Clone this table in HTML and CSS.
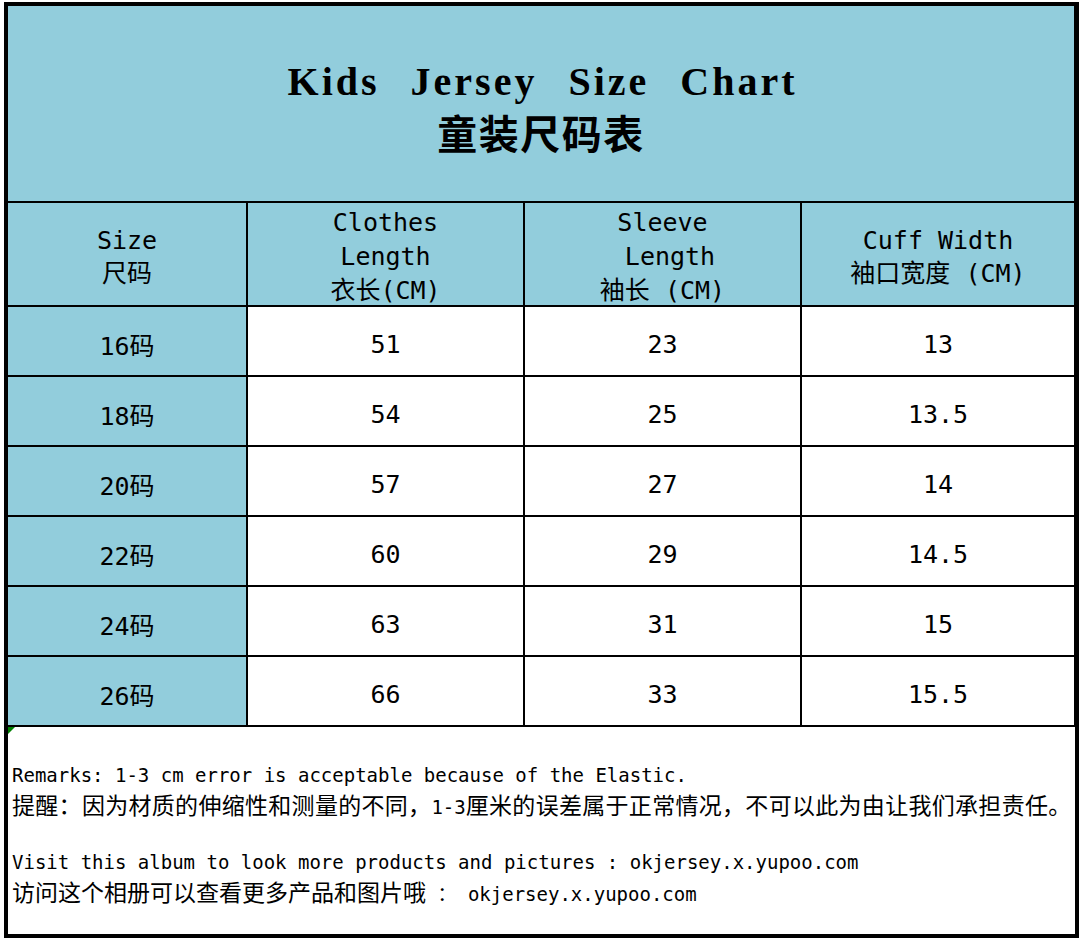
FILE: index.html
```html
<!DOCTYPE html>
<html lang="zh-CN">
<head>
<meta charset="utf-8">
<title>Kids Jersey Size Chart</title>
<link rel="stylesheet" href="styles.css">
</head>
<body>
<div class="sheet">
  <div class="chart">
    <div class="title">
      <div class="title-en">Kids Jersey Size Chart</div>
      <div class="title-zh">童装尺码表</div>
    </div>

    <div class="cell head"><span>Size</span><span>尺码</span></div>
    <div class="cell head three"><span>Clothes</span><span>Length</span><span>衣长(CM)</span></div>
    <div class="cell head three"><span>Sleeve</span><span>&nbsp;Length</span><span>袖长 (CM)</span></div>
    <div class="cell head"><span>Cuff Width</span><span>袖口宽度 (CM)</span></div>

    <div class="cell size">16码</div><div class="cell val">51</div><div class="cell val">23</div><div class="cell val">13</div>
    <div class="cell size">18码</div><div class="cell val">54</div><div class="cell val">25</div><div class="cell val">13.5</div>
    <div class="cell size">20码</div><div class="cell val">57</div><div class="cell val">27</div><div class="cell val">14</div>
    <div class="cell size">22码</div><div class="cell val">60</div><div class="cell val">29</div><div class="cell val">14.5</div>
    <div class="cell size">24码</div><div class="cell val">63</div><div class="cell val">31</div><div class="cell val">15</div>
    <div class="cell size">26码</div><div class="cell val">66</div><div class="cell val">33</div><div class="cell val">15.5</div>
  </div>

  <div class="remarks">
    <div class="group">
      <p class="en">Remarks: 1-3 cm error is acceptable because of the Elastic.</p>
      <p class="zh wide">提醒：因为材质的伸缩性和测量的不同，<span class="en-inline">1-3</span>厘米的误差属于正常情况，不可以此为由让我们承担责任。</p>
    </div>
    <div class="group">
      <p class="en">Visit this album to look more products and pictures : okjersey.x.yupoo.com</p>
      <p class="zh">访问这个相册可以查看更多产品和图片哦<span class="en-inline"> ： okjersey.x.yupoo.com</span></p>
    </div>
  </div>
</div>
</body>
</html>
```

FILE: styles.css
```css
html, body {
  margin: 0;
  padding: 0;
  background: #ffffff;
}

.sheet {
  box-sizing: border-box;
  width: 1075px;
  height: 936px;
  margin: 2px 0 0 4px;
  border: 4px solid #000000;
  background: #ffffff;
  display: flex;
  flex-direction: column;
}

.chart {
  display: grid;
  grid-template-columns: 238px 275px 275px 272px;
  grid-template-rows: 195px 102px repeat(6, 68px);
  gap: 2px;
  background: #000000;
  border-bottom: 2px solid #000000;
}

.title {
  grid-column: 1 / -1;
  background: #92cddc;
  display: flex;
  flex-direction: column;
  align-items: center;
  justify-content: center;
  padding-top: 6px;
  color: #000000;
}

.title-en {
  font-family: "Liberation Serif", serif;
  font-weight: bold;
  font-size: 40px;
  line-height: 51px;
  letter-spacing: 3px;
  word-spacing: 18px;
  padding-left: 3px;
}

.title-zh {
  font-family: "Noto Sans CJK SC", sans-serif;
  font-weight: bold;
  font-size: 40px;
  line-height: 51px;
  letter-spacing: 1.5px;
}

.cell {
  display: flex;
  flex-direction: column;
  align-items: center;
  justify-content: center;
  font-family: "DejaVu Sans Mono", "Noto Sans CJK SC", monospace;
  font-size: 25px;
  color: #000000;
  white-space: pre;
}

.head {
  background: #92cddc;
  line-height: 33px;
  padding-top: 6px;
  box-sizing: border-box;
}

.head.three {
  line-height: 34px;
}

.size {
  background: #92cddc;
  padding-top: 6px;
  box-sizing: border-box;
}

.val {
  background: #ffffff;
  padding-top: 6px;
  box-sizing: border-box;
}

.remarks {
  position: relative;
  flex: 1;
  padding: 34px 0 0 4px;
  background: #ffffff;
}

.remarks::before {
  content: "";
  position: absolute;
  left: 0;
  top: 0;
  width: 0;
  height: 0;
  border-top: 7px solid #008000;
  border-right: 7px solid transparent;
}

.group + .group {
  margin-top: 29px;
}

.remarks p {
  margin: 0;
  height: 29px;
  line-height: 29px;
  color: #000000;
  white-space: nowrap;
}

.en {
  font-family: "DejaVu Sans Mono", monospace;
  font-size: 19px;
}

.zh {
  font-family: "Noto Sans CJK SC", sans-serif;
  font-size: 23px;
}

.zh.wide {
  letter-spacing: 0.3px;
}

.en-inline {
  font-family: "DejaVu Sans Mono", "Noto Sans CJK SC", monospace;
  font-size: 19px;
  line-height: 1;
  letter-spacing: 0;
}
```
